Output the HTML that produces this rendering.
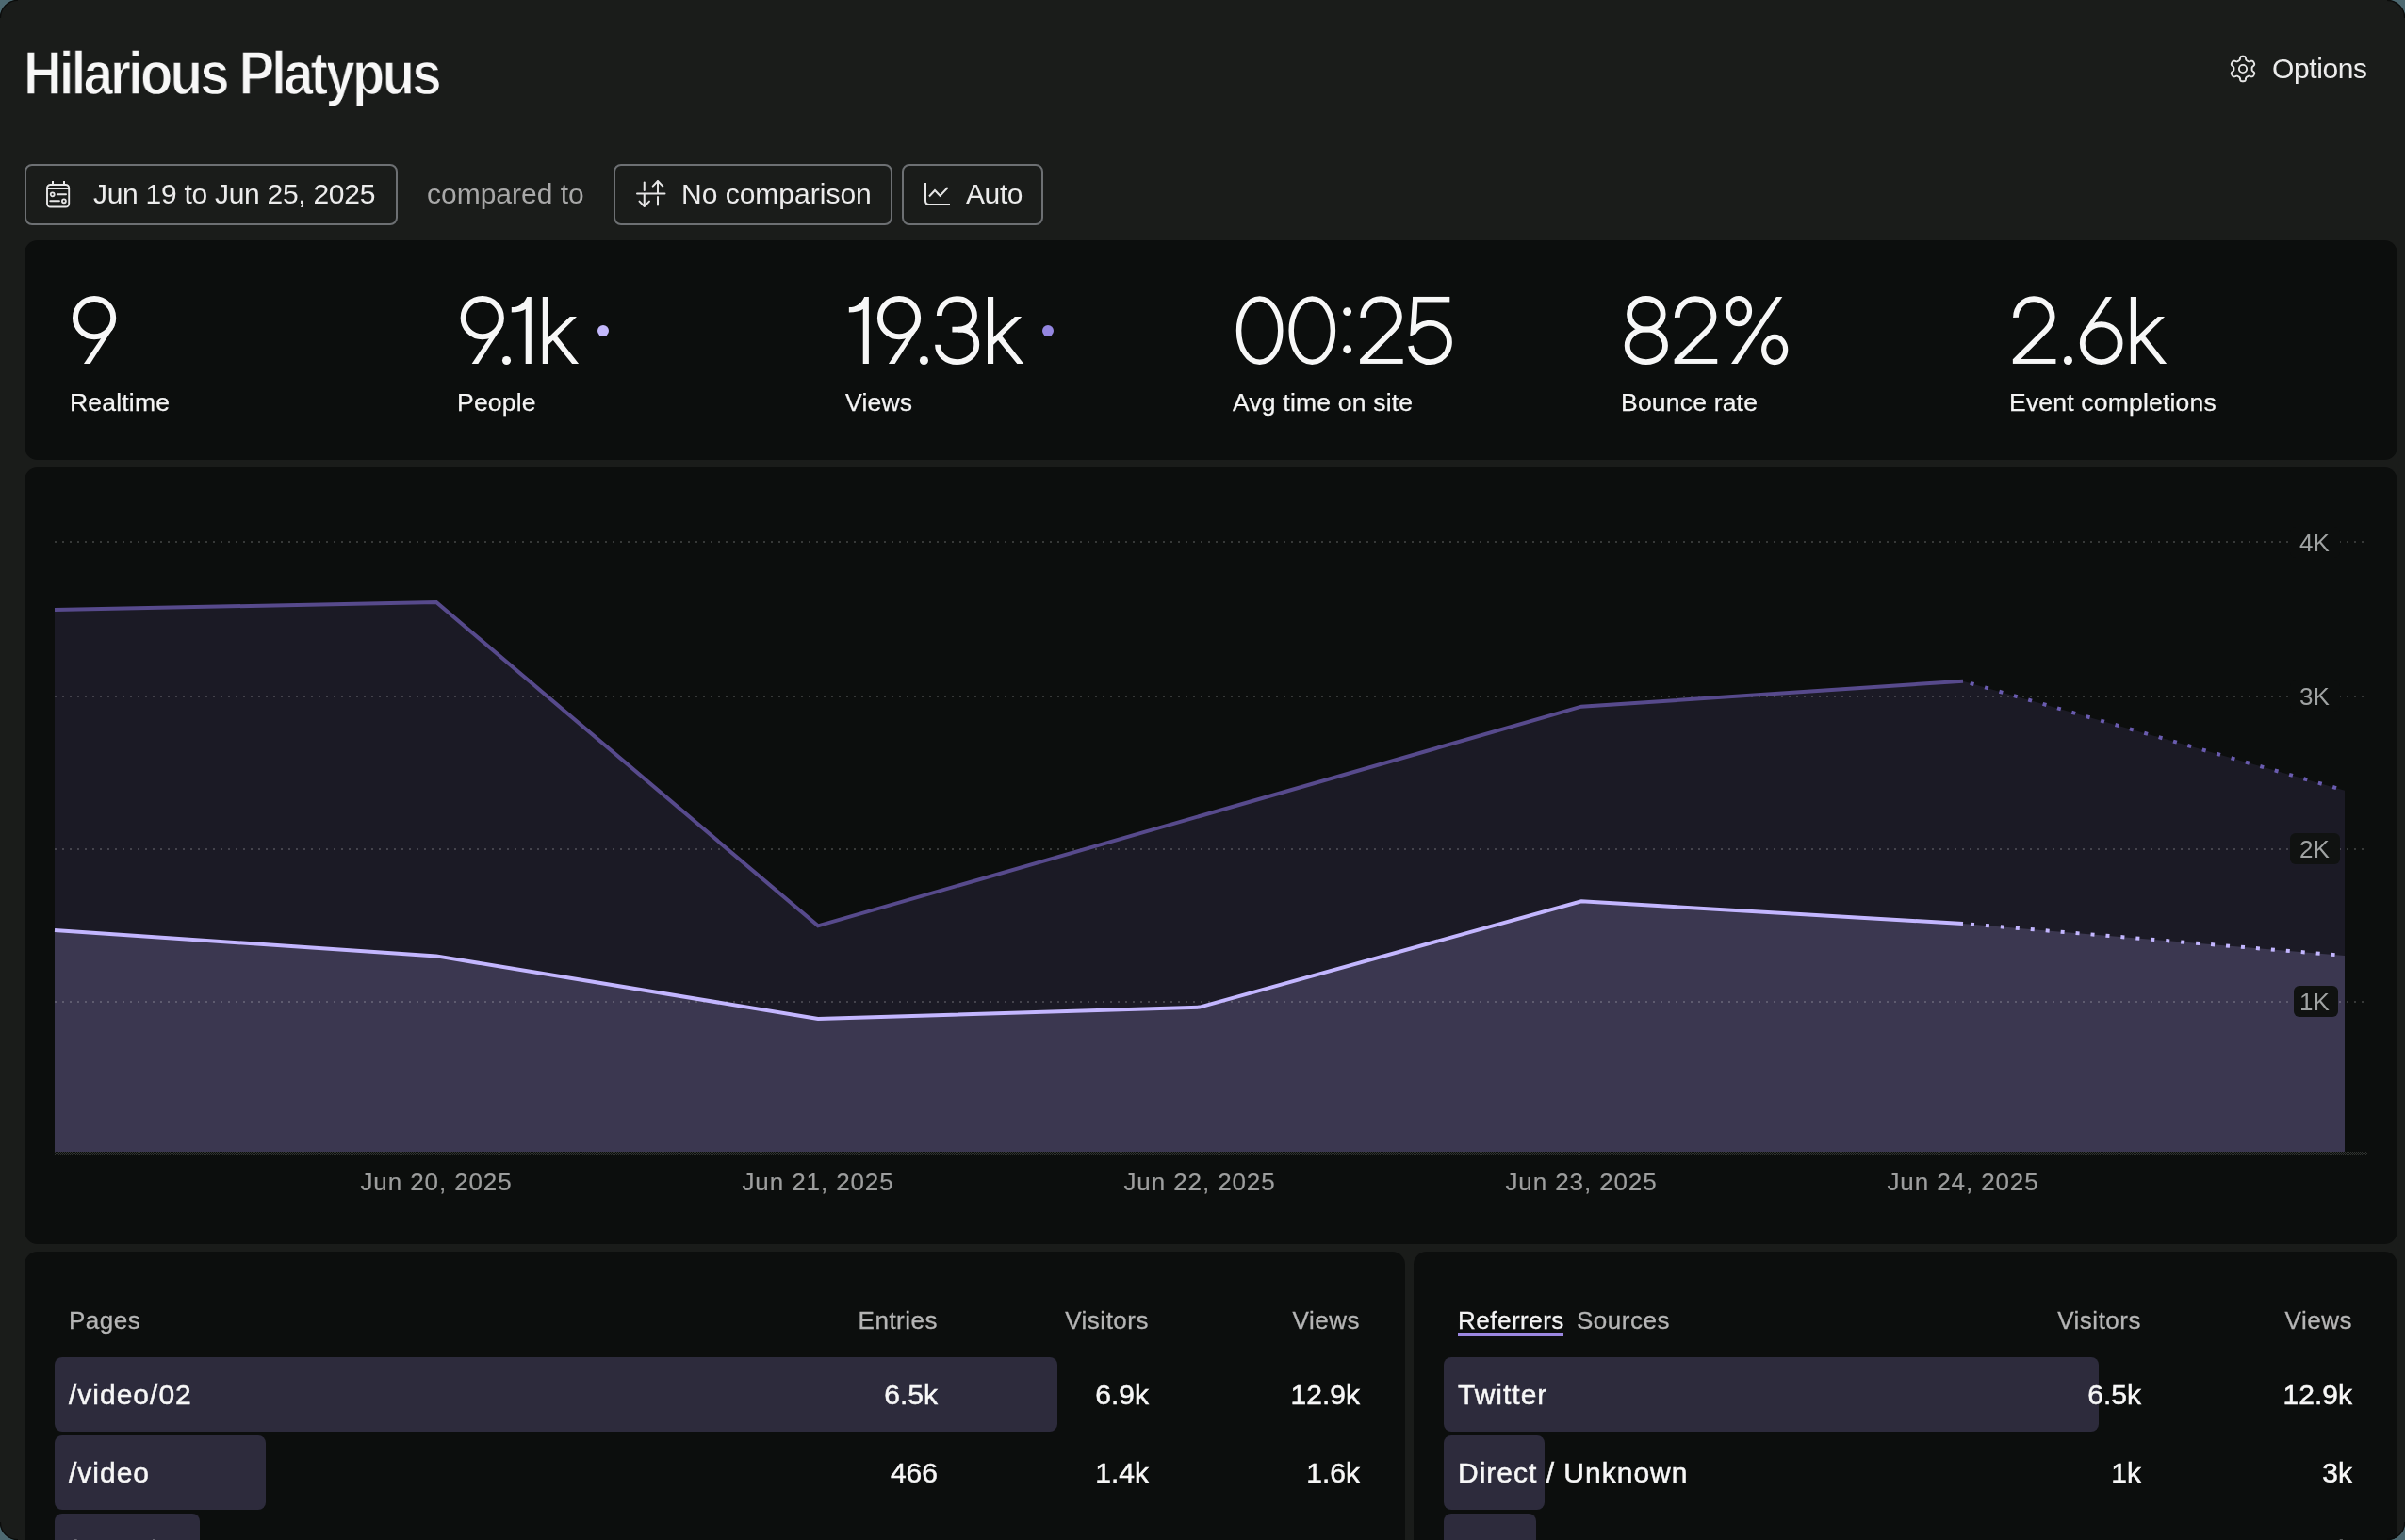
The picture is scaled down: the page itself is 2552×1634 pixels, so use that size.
<!DOCTYPE html>
<html>
<head>
<meta charset="utf-8">
<style>
html,body{margin:0;padding:0;}
body{width:2552px;height:1634px;overflow:hidden;background:#4d6971;font-family:"Liberation Sans",sans-serif;}
.win{position:absolute;left:0;top:0;width:2552px;height:1634px;background:#1a1c1a;border-radius:19px;overflow:hidden;}
.t{position:absolute;white-space:nowrap;line-height:1;will-change:transform;}
.lbl,.hd,.v,.xl,.yl span{will-change:transform;}
.card{position:absolute;background:#0c0e0d;border-radius:14px;}
.btn{position:absolute;top:174px;height:61px;border:2px solid #6d7073;border-radius:8px;}
.lbl{position:absolute;white-space:nowrap;line-height:1;font-size:26.5px;color:#f4f4f4;letter-spacing:0.2px;-webkit-text-stroke:0.25px #f4f4f4;}
.bar{position:absolute;background:#2d2b3c;border-radius:8px;height:79px;}
.hd{position:absolute;white-space:nowrap;line-height:1;font-size:26px;color:#b5b5b5;letter-spacing:0.5px;-webkit-text-stroke:0.3px #b5b5b5;}
.v{position:absolute;white-space:nowrap;line-height:1;font-size:30px;color:#f7f7f7;-webkit-text-stroke:0.5px #f7f7f7;}
.nm{letter-spacing:1px;}
.r{text-align:right;}
.xl{position:absolute;white-space:nowrap;line-height:1;font-size:26px;color:#9d9e9e;width:300px;text-align:center;letter-spacing:0.9px;-webkit-text-stroke:0.2px #9d9e9e;}
.yl{position:absolute;white-space:nowrap;line-height:1;font-size:26px;color:#a0a3a3;background:#101211;border-radius:6px;}
.dot{position:absolute;width:12px;height:12px;border-radius:6px;}
</style>
</head>
<body>
<div class="win">
  <div class="t" style="left:25px;top:45.5px;font-size:64px;color:#f7f7f7;font-weight:bold;-webkit-text-stroke:1.3px #1a1c1a;letter-spacing:-3.2px;transform:scaleX(0.88);transform-origin:0 0;">Hilarious Platypus</div>
  <svg style="position:absolute;left:2364.1px;top:57.2px" width="32" height="32" viewBox="0 0 32 32"><path d="M16.00,2.70 L16.35,2.71 L16.70,2.73 L17.04,2.77 L17.38,2.83 L17.72,2.93 L18.05,3.08 L18.35,3.32 L18.61,3.70 L18.82,4.26 L18.96,4.94 L19.07,5.62 L19.19,6.18 L19.34,6.57 L19.52,6.83 L19.72,7.02 L19.93,7.18 L20.14,7.31 L20.36,7.44 L20.58,7.56 L20.80,7.69 L21.02,7.81 L21.23,7.94 L21.45,8.07 L21.68,8.19 L21.91,8.29 L22.18,8.37 L22.50,8.39 L22.91,8.32 L23.45,8.15 L24.10,7.90 L24.76,7.69 L25.34,7.59 L25.80,7.63 L26.17,7.77 L26.46,7.97 L26.71,8.22 L26.94,8.48 L27.15,8.76 L27.34,9.05 L27.52,9.35 L27.69,9.65 L27.84,9.97 L27.98,10.29 L28.10,10.61 L28.18,10.95 L28.21,11.31 L28.15,11.70 L27.96,12.12 L27.58,12.57 L27.06,13.04 L26.52,13.47 L26.10,13.85 L25.84,14.18 L25.70,14.46 L25.63,14.73 L25.61,14.99 L25.60,15.24 L25.60,15.50 L25.60,15.75 L25.60,16.00 L25.60,16.25 L25.60,16.50 L25.60,16.76 L25.61,17.01 L25.63,17.27 L25.70,17.54 L25.84,17.82 L26.10,18.15 L26.52,18.53 L27.06,18.96 L27.58,19.43 L27.96,19.88 L28.15,20.30 L28.21,20.69 L28.18,21.05 L28.10,21.39 L27.98,21.71 L27.84,22.03 L27.69,22.35 L27.52,22.65 L27.34,22.95 L27.15,23.24 L26.94,23.52 L26.71,23.78 L26.46,24.03 L26.17,24.23 L25.80,24.37 L25.34,24.41 L24.76,24.31 L24.10,24.10 L23.45,23.85 L22.91,23.68 L22.50,23.61 L22.18,23.63 L21.91,23.71 L21.68,23.81 L21.45,23.93 L21.23,24.06 L21.02,24.19 L20.80,24.31 L20.58,24.44 L20.36,24.56 L20.14,24.69 L19.93,24.82 L19.72,24.98 L19.52,25.17 L19.34,25.43 L19.19,25.82 L19.07,26.38 L18.96,27.06 L18.82,27.74 L18.61,28.30 L18.35,28.68 L18.05,28.92 L17.72,29.07 L17.38,29.17 L17.04,29.23 L16.70,29.27 L16.35,29.29 L16.00,29.30 L15.65,29.29 L15.30,29.27 L14.96,29.23 L14.62,29.17 L14.28,29.07 L13.95,28.92 L13.65,28.68 L13.39,28.30 L13.18,27.74 L13.04,27.06 L12.93,26.38 L12.81,25.82 L12.66,25.43 L12.48,25.17 L12.28,24.98 L12.07,24.82 L11.86,24.69 L11.64,24.56 L11.42,24.44 L11.20,24.31 L10.98,24.19 L10.77,24.06 L10.55,23.93 L10.32,23.81 L10.09,23.71 L9.82,23.63 L9.50,23.61 L9.09,23.68 L8.55,23.85 L7.90,24.10 L7.24,24.31 L6.66,24.41 L6.20,24.37 L5.83,24.23 L5.54,24.03 L5.29,23.78 L5.06,23.52 L4.85,23.24 L4.66,22.95 L4.48,22.65 L4.31,22.35 L4.16,22.03 L4.02,21.71 L3.90,21.39 L3.82,21.05 L3.79,20.69 L3.85,20.30 L4.04,19.88 L4.42,19.43 L4.94,18.96 L5.48,18.53 L5.90,18.15 L6.16,17.82 L6.30,17.54 L6.37,17.27 L6.39,17.01 L6.40,16.76 L6.40,16.50 L6.40,16.25 L6.40,16.00 L6.40,15.75 L6.40,15.50 L6.40,15.24 L6.39,14.99 L6.37,14.73 L6.30,14.46 L6.16,14.18 L5.90,13.85 L5.48,13.47 L4.94,13.04 L4.42,12.57 L4.04,12.12 L3.85,11.70 L3.79,11.31 L3.82,10.95 L3.90,10.61 L4.02,10.29 L4.16,9.97 L4.31,9.65 L4.48,9.35 L4.66,9.05 L4.85,8.76 L5.06,8.48 L5.29,8.22 L5.54,7.97 L5.83,7.77 L6.20,7.63 L6.66,7.59 L7.24,7.69 L7.90,7.90 L8.55,8.15 L9.09,8.32 L9.50,8.39 L9.82,8.37 L10.09,8.29 L10.32,8.19 L10.55,8.07 L10.77,7.94 L10.98,7.81 L11.20,7.69 L11.42,7.56 L11.64,7.44 L11.86,7.31 L12.07,7.18 L12.28,7.02 L12.48,6.83 L12.66,6.57 L12.81,6.18 L12.93,5.62 L13.04,4.94 L13.18,4.26 L13.39,3.70 L13.65,3.32 L13.95,3.08 L14.28,2.93 L14.62,2.83 L14.96,2.77 L15.30,2.73 L15.65,2.71 L16.00,2.70Z" fill="none" stroke="#e6e6e6" stroke-width="1.9" stroke-linejoin="round"/><circle cx="16" cy="16" r="4.1" fill="none" stroke="#e6e6e6" stroke-width="1.9"/></svg>
  <div class="t" style="left:2411px;top:58.2px;font-size:30px;color:#ececec;letter-spacing:-0.4px">Options</div>

  <div class="btn" style="left:26px;width:392px;"></div>
  <svg style="position:absolute;left:46px;top:189px" width="32" height="34" viewBox="0 0 32 34">
    <rect x="4" y="7" width="23.2" height="23.5" rx="3.5" fill="none" stroke="#e6e6e6" stroke-width="1.9"/>
    <line x1="4" y1="11" x2="27.2" y2="11" stroke="#e6e6e6" stroke-width="1.9"/>
    <line x1="10" y1="3" x2="10" y2="7" stroke="#e6e6e6" stroke-width="2"/>
    <line x1="22" y1="3" x2="22" y2="7" stroke="#e6e6e6" stroke-width="2"/>
    <circle cx="9.7" cy="17.3" r="2" fill="none" stroke="#e6e6e6" stroke-width="1.8"/>
    <line x1="14.8" y1="17.3" x2="24" y2="17.3" stroke="#e6e6e6" stroke-width="2" stroke-linecap="round"/>
    <line x1="7.3" y1="24.3" x2="16.9" y2="24.3" stroke="#e6e6e6" stroke-width="2" stroke-linecap="round"/>
    <circle cx="21.9" cy="24.3" r="2" fill="none" stroke="#e6e6e6" stroke-width="1.8"/>
  </svg>
  <div class="t" style="left:99px;top:191px;font-size:30px;color:#ececec;letter-spacing:-0.28px">Jun 19 to Jun 25, 2025</div>
  <div class="t" style="left:453px;top:191px;font-size:30px;color:#a8a8a8;">compared to</div>
  <div class="btn" style="left:651px;width:292px;"></div>
  <svg style="position:absolute;left:672px;top:189px" width="38" height="34" viewBox="0 0 38 34">
    <line x1="4" y1="16.6" x2="33.5" y2="16.6" stroke="#e6e6e6" stroke-width="2" stroke-linecap="round"/>
    <line x1="11.75" y1="4.5" x2="11.75" y2="13" stroke="#e6e6e6" stroke-width="2" stroke-linecap="round"/>
    <path d="M11.75,17 V30 M6.5,24.6 L11.75,30 L17,24.6" fill="none" stroke="#e6e6e6" stroke-width="2" stroke-linecap="round" stroke-linejoin="round"/>
    <line x1="26" y1="20" x2="26" y2="28.5" stroke="#e6e6e6" stroke-width="2" stroke-linecap="round"/>
    <path d="M26,16 V3 M20.7,8.6 L26,3 L31.3,8.6" fill="none" stroke="#e6e6e6" stroke-width="2" stroke-linecap="round" stroke-linejoin="round"/>
  </svg>
  <div class="t" style="left:723px;top:191px;font-size:30px;color:#ececec;">No comparison</div>
  <div class="btn" style="left:957px;width:146px;"></div>
  <svg style="position:absolute;left:976px;top:189px" width="36" height="34" viewBox="0 0 36 34">
    <path d="M6,5 V24 Q6,28 10,28 H32" fill="none" stroke="#e6e6e6" stroke-width="2" stroke-linecap="butt"/>
    <path d="M10,19.5 L16,13 L21.5,18.7 L29.7,10" fill="none" stroke="#e6e6e6" stroke-width="2"/>
  </svg>
  <div class="t" style="left:1025px;top:191px;font-size:30px;color:#ececec;letter-spacing:-0.4px">Auto</div>

  <div class="card" style="left:26px;top:255px;width:2518px;height:233px;"></div>
  <svg style="position:absolute;left:0;top:0" width="2552" height="500" viewBox="0 0 2552 500"><ellipse cx="100.08" cy="337.13" rx="20.10" ry="20.10" fill="none" stroke="#f7f7f7" stroke-width="6.0"/><polygon points="122.27,344.70 95.67,385.90 88.97,385.90 107.67,358.20" fill="#f7f7f7"/><ellipse cx="511.78" cy="337.13" rx="20.10" ry="20.10" fill="none" stroke="#f7f7f7" stroke-width="6.0"/><polygon points="533.97,344.70 507.37,385.90 500.67,385.90 519.37,358.20" fill="#f7f7f7"/><circle cx="537.50" cy="382.50" r="4.55" fill="#f7f7f7"/><path d="M559.10,314.93 L563.84,314.93 L563.84,385.9 L557.70,385.9 L557.70,328.08 C554.70,330.23 549.70,331.58 542.80,331.58 L542.80,326.03 C550.70,326.03 555.70,322.43 559.10,314.93 Z" fill="#f7f7f7"/><polygon points="575.80,314.90 581.93,314.90 581.93,358.10 604.70,335.90 612.00,335.90 591.00,356.40 614.10,385.90 607.10,385.90 586.90,361.00 581.93,365.70 581.93,385.90 575.80,385.90" fill="#f7f7f7"/><path d="M917.14,314.93 L921.88,314.93 L921.88,385.9 L915.74,385.9 L915.74,328.08 C912.74,330.23 907.74,331.58 900.84,331.58 L900.84,326.03 C908.74,326.03 913.74,322.43 917.14,314.93 Z" fill="#f7f7f7"/><ellipse cx="954.01" cy="337.13" rx="20.10" ry="20.10" fill="none" stroke="#f7f7f7" stroke-width="6.0"/><polygon points="976.20,344.70 949.60,385.90 942.90,385.90 961.60,358.20" fill="#f7f7f7"/><circle cx="980.45" cy="382.50" r="4.55" fill="#f7f7f7"/><path d="M996.76,335.1 A18.62 18.04 0 0 1 1034.00,335.1 C1034.00,343.5 1027.00,349.55 1017.00,349.55 L1010.40,349.55" fill="none" stroke="#f7f7f7" stroke-width="5.8" stroke-linecap="butt"/><path d="M1017.00,349.55 C1029.00,349.55 1036.30,355.00 1036.30,365.8 A20.65 18.3 0 0 1 995.00,365.8" fill="none" stroke="#f7f7f7" stroke-width="5.8" stroke-linecap="butt"/><polygon points="1048.00,314.90 1054.13,314.90 1054.13,358.10 1076.90,335.90 1084.20,335.90 1063.20,356.40 1086.30,385.90 1079.30,385.90 1059.10,361.00 1054.13,365.70 1054.13,385.90 1048.00,385.90" fill="#f7f7f7"/><ellipse cx="1336.65" cy="350.70" rx="22.10" ry="33.67" fill="none" stroke="#f7f7f7" stroke-width="5.5"/><ellipse cx="1392.30" cy="350.70" rx="22.10" ry="33.67" fill="none" stroke="#f7f7f7" stroke-width="5.5"/><circle cx="1429.64" cy="330.55" r="4.4" fill="#f7f7f7"/><circle cx="1429.64" cy="370.75" r="4.4" fill="#f7f7f7"/><path d="M1446.28,336.85 A19.1 19.1 0 0 1 1484.85,336.1 C1484.85,341.5 1482.58,345.9 1478.44,350 L1445.47,382.97" fill="none" stroke="#f7f7f7" stroke-width="5.9" stroke-linecap="butt"/><rect x="1443.08" y="380.97" width="45.59" height="4.97" fill="#f7f7f7"/><rect x="1499.20" y="314.93" width="39.1" height="5.57" fill="#f7f7f7"/><polygon points="1499.20,314.93 1504.74,314.93 1502.30,354.00 1496.26,357.00" fill="#f7f7f7"/><path d="M1499.46,353.15 A20.6 20.6 0 1 1 1496.99,366.9" fill="none" stroke="#f7f7f7" stroke-width="5.8" stroke-linecap="butt"/><ellipse cx="1746.85" cy="333.34" rx="17.80" ry="16.36" fill="none" stroke="#f7f7f7" stroke-width="5.85"/><ellipse cx="1746.85" cy="366.77" rx="20.15" ry="17.40" fill="none" stroke="#f7f7f7" stroke-width="5.85"/><path d="M1779.85,336.85 A19.1 19.1 0 0 1 1818.42,336.1 C1818.42,341.5 1816.15,345.9 1812.01,350 L1779.04,382.97" fill="none" stroke="#f7f7f7" stroke-width="5.9" stroke-linecap="butt"/><rect x="1776.65" y="380.97" width="45.59" height="4.97" fill="#f7f7f7"/><ellipse cx="1845.00" cy="330.10" rx="11.50" ry="13.60" fill="none" stroke="#f7f7f7" stroke-width="5.2"/><ellipse cx="1883.15" cy="371.05" rx="11.50" ry="13.60" fill="none" stroke="#f7f7f7" stroke-width="5.2"/><polygon points="1884.90,314.94 1891.30,314.94 1843.70,385.90 1837.00,385.90" fill="#f7f7f7"/><path d="M2139.05,336.85 A19.1 19.1 0 0 1 2177.62,336.1 C2177.62,341.5 2175.35,345.9 2171.21,350 L2138.24,382.97" fill="none" stroke="#f7f7f7" stroke-width="5.9" stroke-linecap="butt"/><rect x="2135.85" y="380.97" width="45.59" height="4.97" fill="#f7f7f7"/><circle cx="2194.45" cy="382.45" r="4.55" fill="#f7f7f7"/><ellipse cx="2229.70" cy="364.15" rx="19.90" ry="19.90" fill="none" stroke="#f7f7f7" stroke-width="5.8"/><polygon points="2234.60,314.94 2241.06,314.94 2217.50,349.50 2209.50,354.00" fill="#f7f7f7"/><polygon points="2260.84,314.90 2266.97,314.90 2266.97,358.10 2289.74,335.90 2297.04,335.90 2276.04,356.40 2299.14,385.90 2292.14,385.90 2271.94,361.00 2266.97,365.70 2266.97,385.90 2260.84,385.90" fill="#f7f7f7"/></svg>
  <div class="dot" style="left:634px;top:345px;background:#c3b8fb"></div>
  <div class="dot" style="left:1106px;top:345px;background:#9486e0"></div>
  <div class="lbl" style="left:74px;top:414px;">Realtime</div>
  <div class="lbl" style="left:485px;top:414px;">People</div>
  <div class="lbl" style="left:897px;top:414px;">Views</div>
  <div class="lbl" style="left:1308px;top:414px;">Avg time on site</div>
  <div class="lbl" style="left:1720px;top:414px;">Bounce rate</div>
  <div class="lbl" style="left:2132px;top:414px;">Event completions</div>

  <div class="card" style="left:26px;top:496px;width:2518px;height:824px;"></div>
  <svg style="position:absolute;left:0;top:0" width="2552" height="1634" viewBox="0 0 2552 1634">
<polygon points="58.0,647.0 463.0,639.0 868.0,982.4 1273.0,866.0 1678.0,749.7 2083.0,722.7 2488.0,838.7 2488,1222 58,1222" fill="#1b1a25"/>
<polygon points="58.0,987.0 463.0,1014.4 868.0,1081.0 1273.0,1068.6 1678.0,956.3 2083.0,980.0 2488.0,1014.0 2488,1222 58,1222" fill="#3b3750"/>
<line x1="58" y1="575" x2="2508" y2="575" stroke="#ffffff" stroke-opacity="0.18" stroke-width="2" stroke-dasharray="2 6"/>
<line x1="58" y1="739" x2="2508" y2="739" stroke="#ffffff" stroke-opacity="0.18" stroke-width="2" stroke-dasharray="2 6"/>
<line x1="58" y1="901" x2="2508" y2="901" stroke="#ffffff" stroke-opacity="0.18" stroke-width="2" stroke-dasharray="2 6"/>
<line x1="58" y1="1063" x2="2508" y2="1063" stroke="#ffffff" stroke-opacity="0.18" stroke-width="2" stroke-dasharray="2 6"/>
<defs><pattern id="chk" x="0" y="0" width="2" height="2" patternUnits="userSpaceOnUse"><rect x="0" y="0" width="1" height="1" fill="#313431"/><rect x="1" y="1" width="1" height="1" fill="#313431"/></pattern></defs>
<rect x="58" y="1222" width="2454" height="4" fill="url(#chk)"/>
<path d="M58.0,647.0 L463.0,639.0 L868.0,982.4 L1273.0,866.0 L1678.0,749.7 L2083.0,722.7" fill="none" stroke="#574a8c" stroke-width="4" stroke-linejoin="miter"/>
<path d="M2083.0,722.7 L2488.0,838.7" fill="none" stroke="#6a5cb0" stroke-width="4" stroke-dasharray="4 12" stroke-dashoffset="-8"/>
<path d="M58.0,987.0 L463.0,1014.4 L868.0,1081.0 L1273.0,1068.6 L1678.0,956.3 L2083.0,980.0" fill="none" stroke="#c3b6ff" stroke-width="4" stroke-linejoin="miter"/>
<path d="M2083.0,980.0 L2488.0,1014.0" fill="none" stroke="#c3b6ff" stroke-width="4" stroke-dasharray="4 12" stroke-dashoffset="-8"/>
</svg>
  <div class="yl" style="background:#0c0e0d;left:2430px;top:558.5px;width:53px;height:33px;"><span style="position:absolute;right:11px;top:4px">4K</span></div>
  <div class="yl" style="background:#0c0e0d;left:2430px;top:721.5px;width:53px;height:33px;"><span style="position:absolute;right:11px;top:4px">3K</span></div>
  <div class="yl" style="left:2430px;top:884px;width:53px;height:33px;"><span style="position:absolute;right:11px;top:4px">2K</span></div>
  <div class="yl" style="left:2434px;top:1046px;width:47px;height:33px;"><span style="position:absolute;right:9px;top:4px">1K</span></div>
  <div class="xl" style="left:313px;top:1240.5px;">Jun 20, 2025</div>
  <div class="xl" style="left:718px;top:1240.5px;">Jun 21, 2025</div>
  <div class="xl" style="left:1123px;top:1240.5px;">Jun 22, 2025</div>
  <div class="xl" style="left:1528px;top:1240.5px;">Jun 23, 2025</div>
  <div class="xl" style="left:1933px;top:1240.5px;">Jun 24, 2025</div>

  <div class="card" style="left:26px;top:1328px;width:1465px;height:400px;"></div>
  <div class="hd" style="left:73px;top:1388px;">Pages</div>
  <div class="hd r" style="left:695px;width:300px;top:1388px;">Entries</div>
  <div class="hd r" style="left:919px;width:300px;top:1388px;">Visitors</div>
  <div class="hd r" style="left:1143px;width:300px;top:1388px;">Views</div>
  <div class="bar" style="left:58px;top:1440px;width:1064px;"></div>
  <div class="bar" style="left:58px;top:1523px;width:224px;"></div>
  <div class="bar" style="left:58px;top:1606px;width:154px;"></div>
  <div class="v nm" style="left:73px;top:1465px;">/video/02</div>
  <div class="v r" style="left:695px;width:300px;top:1465px;">6.5k</div>
  <div class="v r" style="left:919px;width:300px;top:1465px;">6.9k</div>
  <div class="v r" style="left:1143px;width:300px;top:1465px;">12.9k</div>
  <div class="v nm" style="left:73px;top:1548px;">/video</div>
  <div class="v r" style="left:695px;width:300px;top:1548px;">466</div>
  <div class="v r" style="left:919px;width:300px;top:1548px;">1.4k</div>
  <div class="v r" style="left:1143px;width:300px;top:1548px;">1.6k</div>
  <div class="v nm" style="left:73px;top:1631px;">/news/summer</div>
  <div class="v r" style="left:695px;width:300px;top:1631px;">31</div>
  <div class="v r" style="left:919px;width:300px;top:1631px;">71</div>
  <div class="v r" style="left:1143px;width:300px;top:1631px;">91</div>

  <div class="card" style="left:1500px;top:1328px;width:1044px;height:400px;"></div>
  <div class="hd" style="left:1547px;top:1388px;color:#f4f4f4;-webkit-text-stroke:0.3px #f4f4f4">Referrers</div>
  <div style="position:absolute;left:1547px;top:1414px;width:112px;height:4px;background:#9b87e0"></div>
  <div class="hd" style="left:1673px;top:1388px;">Sources</div>
  <div class="hd r" style="left:1972px;width:300px;top:1388px;">Visitors</div>
  <div class="hd r" style="left:2196px;width:300px;top:1388px;">Views</div>
  <div class="bar" style="left:1532px;top:1440px;width:695px;"></div>
  <div class="bar" style="left:1532px;top:1523px;width:107px;"></div>
  <div class="bar" style="left:1532px;top:1606px;width:98px;"></div>
  <div class="v nm" style="left:1547px;top:1465px;">Twitter</div>
  <div class="v r" style="left:1972px;width:300px;top:1465px;">6.5k</div>
  <div class="v r" style="left:2196px;width:300px;top:1465px;">12.9k</div>
  <div class="v nm" style="left:1547px;top:1548px;">Direct / Unknown</div>
  <div class="v r" style="left:1972px;width:300px;top:1548px;">1k</div>
  <div class="v r" style="left:2196px;width:300px;top:1548px;">3k</div>
  <div class="v nm" style="left:1547px;top:1631px;">Commons</div>
  <div class="v r" style="left:1972px;width:300px;top:1631px;">807</div>
  <div class="v r" style="left:2196px;width:300px;top:1631px;">2.1k</div>
</div>
<svg style="position:absolute;left:0;top:0" width="2552" height="1634"><g fill="none" stroke="#0b0c0b" stroke-width="1.3"><path d="M0.4,19 A18.6,18.6 0 0 1 19,0.4"/><path d="M2533,0.4 A18.6,18.6 0 0 1 2551.6,19"/><path d="M0.4,1615 A18.6,18.6 0 0 0 19,1633.6"/><path d="M2533,1633.6 A18.6,18.6 0 0 0 2551.6,1615"/></g></svg>
</body>
</html>
